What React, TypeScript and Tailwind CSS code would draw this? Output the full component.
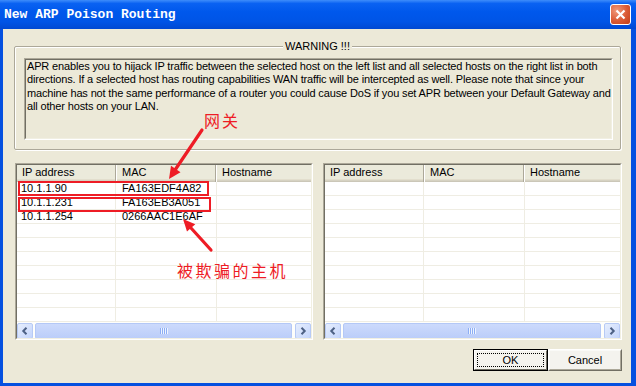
import React from "react";

const ui: React.CSSProperties = { fontFamily: '"Liberation Sans", Arial, sans-serif' };
const cjk: React.CSSProperties = {
  fontFamily: '"Noto Sans CJK SC", "Noto Sans CJK JP", sans-serif',
};

function Chevron({ dir }: { dir: "l" | "r" }) {
  return (
    <svg width="8" height="8" viewBox="0 0 8 8">
      <path
        d={dir === "l" ? "M5.5 0.8 L2.3 4 L5.5 7.2" : "M2.5 0.8 L5.7 4 L2.5 7.2"}
        stroke="#4D6185"
        strokeWidth="2"
        fill="none"
      />
    </svg>
  );
}

function ScrollBtn({ dir }: { dir: "l" | "r" }) {
  return (
    <div className="w-[16px] h-[16px] shrink-0 rounded-[2px] border border-[#B7CAF5] bg-[linear-gradient(135deg,#E6EEFD,#C4D5FC)] flex items-center justify-center">
      <Chevron dir={dir} />
    </div>
  );
}

function Grip() {
  return (
    <svg width="8" height="6" viewBox="0 0 8 6">
      {[0, 2, 4, 6].map((x) => (
        <rect key={x} x={x} y="0" width="1" height="6" fill="#8DAEF5" />
      ))}
      {[1, 3, 5, 7].map((x) => (
        <rect key={x} x={x} y="0" width="1" height="6" fill="#EEF4FE" />
      ))}
    </svg>
  );
}

function Scrollbar() {
  return (
    <div className="h-[17px] bg-[#FEFEFB] flex items-start pt-[1px]">
      <ScrollBtn dir="l" />
      <div className="ml-[2px] mr-[3px] flex-1 h-[16px] rounded-[2px] border border-[#B4C8F6] bg-[linear-gradient(180deg,#CCDAFC,#BBCDF9)] flex items-center justify-center">
        <Grip />
      </div>
      <ScrollBtn dir="r" />
    </div>
  );
}

type Row = [string, string, string];

function ListView({ rows, width }: { rows: Row[]; width: string }) {
  const all: Row[] = [...rows];
  while (all.length < 10) all.push(["", "", ""]);
  return (
    <div
      className={`${width} h-[177px] border border-t-[#ACA899] border-l-[#ACA899] border-r-white border-b-white`}
    >
      <div className="h-full border border-t-[#716F64] border-l-[#716F64] border-r-[#F1EFE2] border-b-[#F1EFE2] bg-white flex flex-col overflow-hidden">
        <div className="h-[17px] flex shrink-0 text-[11px] text-black bg-[#EBEADB] shadow-[inset_0_-1px_#CBC7B8,inset_0_-2px_#D6D2C2,inset_0_-3px_#E2DECD]">
          <div className="w-[99px] shrink-0 pl-[5px] pb-[2px] flex items-center border-r border-[#ACA899]">
            IP address
          </div>
          <div className="w-[100px] shrink-0 pl-[5px] pb-[2px] flex items-center border-l border-white border-r border-r-[#ACA899]">
            MAC
          </div>
          <div className="flex-1 pl-[5px] pb-[2px] flex items-center border-l border-white">
            Hostname
          </div>
        </div>
        <div className="h-[140px] flex flex-col shrink-0">
          {all.map((r, i) => (
            <div key={i} className="h-[14px] flex text-[11px] text-black border-b border-[#EFEDE3]">
              <div className="w-[99px] shrink-0 pl-[4px] flex items-center leading-none border-r border-[#EFEDE3]">
                {r[0]}
              </div>
              <div className="w-[101px] shrink-0 pl-[6px] flex items-center leading-none border-r border-[#EFEDE3]">
                {r[1]}
              </div>
              <div className="flex-1 pl-[6px] flex items-center leading-none">{r[2]}</div>
            </div>
          ))}
        </div>
        <Scrollbar />
      </div>
    </div>
  );
}

export default function App() {
  const lines = [
    "APR enables you to hijack IP traffic between the selected host on the left list and all selected hosts on the right list in both",
    "directions. If a selected host has routing capabilities WAN traffic will be intercepted as well. Please note that since your",
    "machine has not the same performance of a router you could cause DoS if you set APR between your Default Gateway and",
    "all other hosts on your LAN.",
  ];
  return (
    <div
      className="relative w-[636px] h-[386px] flex flex-col bg-[#0550E0] overflow-hidden"
      style={ui}
    >
      <div className="h-[29px] shrink-0 flex items-center justify-between pl-[4px] pr-[5px] bg-[linear-gradient(180deg,#3E8DFB_0%,#0A62F2_12%,#0058EC_40%,#0054E6_75%,#0048D2_100%)]">
        <span
          className="text-white text-[13px] font-bold whitespace-nowrap"
          style={{ fontFamily: '"Liberation Mono", "Courier New", monospace' }}
        >
          New ARP Poison Routing
        </span>
        <div className="w-[21px] h-[21px] rounded-[3px] border border-white bg-[radial-gradient(circle_at_30%_30%,#F19A7B,#DA5A34_55%,#C23D17)] flex items-center justify-center">
          <svg width="11" height="11" viewBox="0 0 11 11">
            <path d="M1.5 1.5 L9.5 9.5 M9.5 1.5 L1.5 9.5" stroke="white" strokeWidth="2.2" />
          </svg>
        </div>
      </div>

      <div className="flex-1 ml-[3px] mr-[5px] mb-[3px] bg-[#ECE9D8] flex flex-col">
        <div className="mt-[17px] ml-[11px] mr-[10px] h-[104px] relative border border-[#ACA899] rounded-[2px] shadow-[inset_1px_1px_0_white,1px_1px_0_white]">
          <div className="absolute left-0 right-0 top-[-8px] flex justify-center">
            <span className="bg-[#ECE9D8] px-[2px] text-[11px] text-black leading-[14px]">
              WARNING !!!
            </span>
          </div>
          <div className="absolute left-[9px] right-[7px] top-[11px] bottom-[9px] border border-t-[#ACA899] border-l-[#ACA899] border-r-white border-b-white">
            <div className="h-full border border-t-[#716F64] border-l-[#716F64] border-r-[#F1EFE2] border-b-[#F1EFE2] pl-[1px] text-[11px] text-black tracking-[-0.15px]">
              {lines.map((l, i) => (
                <div key={i} className="whitespace-nowrap leading-[13.3px]">
                  {l}
                </div>
              ))}
            </div>
          </div>
        </div>

        <div className="mt-[13px] ml-[12px] mr-[9px] flex gap-[10px]">
          <ListView
            width="w-[298px]"
            rows={[
              ["10.1.1.90", "FA163EDF4A82", ""],
              ["10.1.1.231", "FA163EB3A051", ""],
              ["10.1.1.254", "0266AAC1E6AF", ""],
            ]}
          />
          <ListView width="w-[299px]" rows={[]} />
        </div>

        <div className="mt-[9px] mr-[9px] flex justify-end">
          <div className="w-[75px] h-[22px] border border-black">
            <div className="h-full border border-t-white border-l-white border-r-[#716F64] border-b-[#716F64] bg-[#F4F3EE] p-[2px]">
              <div className="h-full border border-dotted border-black flex items-center justify-center text-[11px] text-black">
                OK
              </div>
            </div>
          </div>
          <div className="w-[74px] h-[22px] border border-t-white border-l-white border-r-[#716F64] border-b-[#716F64]">
            <div className="h-full border border-t-[#FAFAF7] border-l-[#FAFAF7] border-r-[#ACA899] border-b-[#ACA899] bg-[#F4F3EE] flex items-center justify-center text-[11px] text-black">
              Cancel
            </div>
          </div>
        </div>
      </div>

      <svg
        className="absolute left-0 top-0 pointer-events-none"
        width="636"
        height="386"
        viewBox="0 0 636 386"
      >
        <rect x="19" y="182" width="189" height="13" fill="none" stroke="#EE1C25" strokeWidth="2" />
        <rect x="19" y="198" width="191" height="13" fill="none" stroke="#EE1C25" strokeWidth="2" />
        <line x1="202" y1="130" x2="175.7" y2="169" stroke="#EE1C25" strokeWidth="3.2" strokeLinecap="round" />
        <polygon points="169,179 180.5,172.2 171,165.8" fill="#EE1C25" />
        <line x1="211" y1="250" x2="191" y2="228" stroke="#EE1C25" strokeWidth="3.2" strokeLinecap="round" />
        <polygon points="183,219 195.3,224.2 187,231.6" fill="#EE1C25" />
      </svg>
      <span
        className="absolute left-[204px] top-[110px] text-[16px] leading-[20px] text-[#EE1C25] tracking-[2px]"
        style={cjk}
      >
        网关
      </span>
      <span
        className="absolute left-[177px] top-[260px] text-[16px] leading-[20px] text-[#EE1C25] tracking-[2.5px]"
        style={cjk}
      >
        被欺骗的主机
      </span>
    </div>
  );
}
